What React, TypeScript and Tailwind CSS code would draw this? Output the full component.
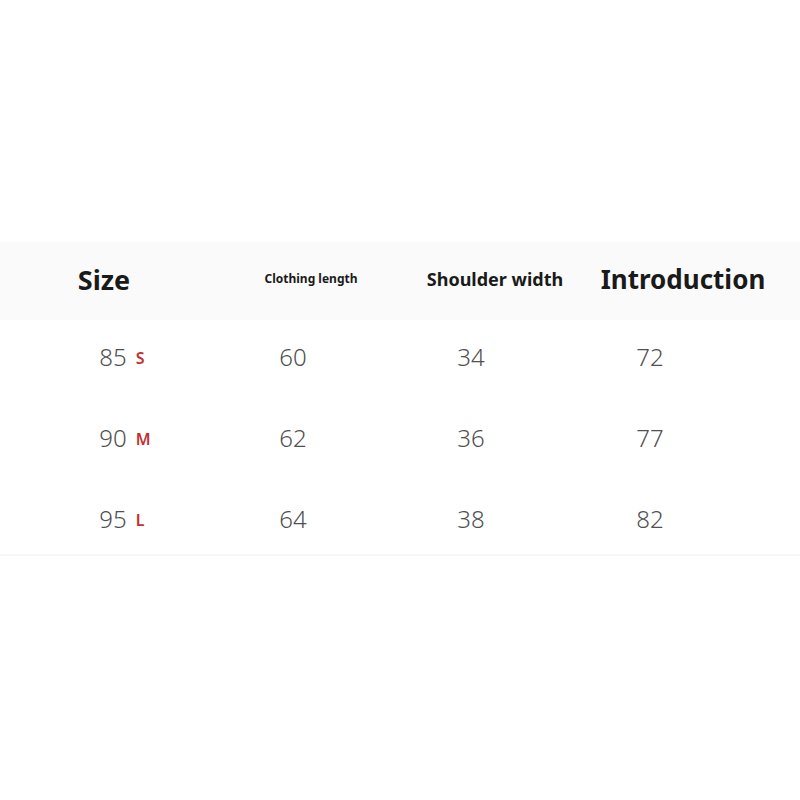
const headers = [
  { label: 'Size', cls: 'text-[27px]' },
  { label: 'Clothing length', cls: 'text-[12px]' },
  { label: 'Shoulder width', cls: 'text-[18px]' },
  { label: 'Introduction', cls: 'text-[26px]' },
];

const rows = [
  { bust: '85', size: 'S', length: '60', shoulder: '34', intro: '72' },
  { bust: '90', size: 'M', length: '62', shoulder: '36', intro: '77' },
  { bust: '95', size: 'L', length: '64', shoulder: '38', intro: '82' },
];

export default function App() {
  return (
    <div className="w-[800px] h-[800px] bg-white font-['Noto_Sans',sans-serif]">
      <div className="pt-[242px]">
        {/* header band */}
        <div className="h-[78px] pb-[4px] bg-[#fafafa] grid grid-cols-[208px_206px_162px_214px] items-center">
          {headers.map((h) => (
            <div key={h.label} className={`text-center font-bold text-[#1a1a1a] leading-none ${h.cls}`}>
              {h.label}
            </div>
          ))}
        </div>

        {/* body */}
        <div className="h-[236px] border-b-2 border-[#f6f6f6]">
          {rows.map((r) => (
            <div
              key={r.bust}
              className="h-[81px] pb-[7px] grid grid-cols-[248px_90px_266px_92px] items-center text-[24px] font-light text-[#505050] leading-none"
            >
              <div className="flex items-baseline justify-center gap-[9px]">
                <span>{r.bust}</span>
                <span className="relative -top-[2px] text-[16px] font-semibold text-[#c62f2f] w-[13px]">{r.size}</span>
              </div>
              <div className="text-center">{r.length}</div>
              <div className="text-center">{r.shoulder}</div>
              <div className="text-center">{r.intro}</div>
            </div>
          ))}
        </div>
      </div>
    </div>
  );
}
